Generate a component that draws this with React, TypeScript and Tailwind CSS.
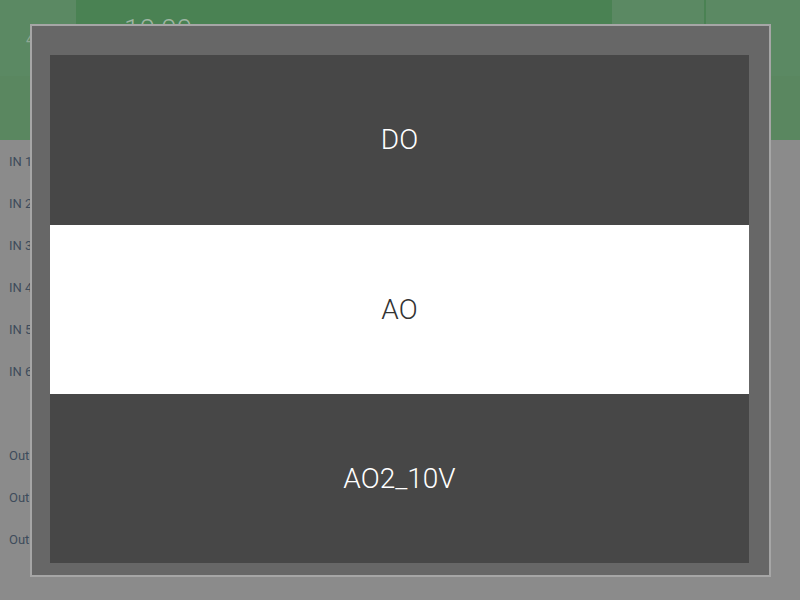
export default function App() {
  const inputs = ["IN 1", "IN 2", "IN 3", "IN 4", "IN 5", "IN 6"];
  const outputs = ["Out 1", "Out 2", "Out 3"];
  const options = [
    { label: "DO", active: false, h: "h-[170px]" },
    { label: "AO", active: true, h: "h-[169px]" },
    { label: "AO2_10V", active: false, h: "h-[169px]" },
  ];

  return (
    <div className="relative w-[800px] h-[600px] overflow-hidden bg-[#8b8b8b]" style={{ fontFamily: "Roboto, 'Noto Sans', sans-serif" }}>
      {/* page behind the dialog */}
      <div className="flex h-[76px]">
        <div className="w-[76px] bg-[#5b8963] text-[#8fa894] text-sm pl-[26px] pt-[30px]">4</div>
        <div className="w-[536px] bg-[#4a8253] text-[#9fb5a3] text-[28px] font-light pl-[48px] pt-[16px] leading-none">10:00</div>
        <div className="w-[94px] bg-[#5b8963] border-r-2 border-[#4a8253]"></div>
        <div className="flex-1 bg-[#5b8963]"></div>
      </div>
      <div className="h-[64px] bg-[#5a8760]"></div>
      <div className="flex flex-col pl-[9px] pt-[13px] text-[13px] text-[#3e4b5b]">
        {inputs.map((s) => (
          <div key={s} className="h-[42px] leading-[18px]">{s}</div>
        ))}
        <div className="h-[42px]"></div>
        {outputs.map((s) => (
          <div key={s} className="h-[42px] leading-[18px]">{s}</div>
        ))}
      </div>

      {/* dialog */}
      <div className="absolute left-[30px] top-[24px] w-[741px] h-[553px] bg-[#676767] border-2 border-[#a6a6a6] px-[18px] pt-[29px]">
        <div className="flex flex-col w-[699px]">
          {options.map((o) => (
            <div
              key={o.label}
              className={`${o.h} flex items-center justify-center text-[28px] font-light ${o.active ? "bg-white text-[#333333]" : "bg-[#474747] text-white"}`}
            >
              {o.label}
            </div>
          ))}
        </div>
      </div>
    </div>
  );
}
